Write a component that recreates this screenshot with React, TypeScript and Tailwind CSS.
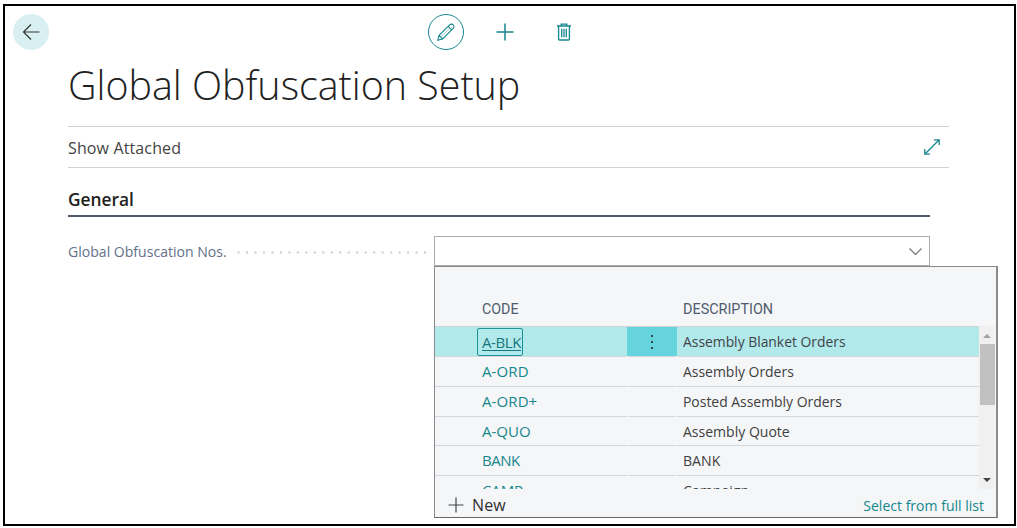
import React from "react";

const rows = [
  { code: "A-ORD", description: "Assembly Orders", codeSpacing: "tracking-[0.1px]", descScale: "scale-x-[0.93]" },
  { code: "A-ORD+", description: "Posted Assembly Orders", codeSpacing: "tracking-[0.1px]", descScale: "scale-x-[0.928]" },
  { code: "A-QUO", description: "Assembly Quote", codeSpacing: "tracking-[0px]", descScale: "scale-x-[0.935]" },
  { code: "BANK", description: "BANK", codeSpacing: "tracking-[-0.5px]", descScale: "scale-x-[0.94]" },
  { code: "CAMP", description: "Campaign", codeSpacing: "tracking-[-0.1px]", descScale: "scale-x-[0.94]" },
];

function Toolbar() {
  return (
    <div className="flex h-[52px] items-center pl-2">
      <button className="flex size-9 items-center justify-center rounded-full bg-[#d9f0f3]">
        <svg className="size-[18px]" viewBox="0 0 18 18" fill="none" stroke="#333" strokeWidth="1.2">
          <path d="M17.5 9H1.5M9 1.5 1.5 9 9 16.5" />
        </svg>
      </button>
      <button className="ml-[379px] flex size-9 items-center justify-center rounded-full border-[1.5px] border-[#16878d]">
        <svg className="size-[18px]" viewBox="0 0 18 18" fill="none" stroke="#16878d" strokeWidth="1.1">
          <path d="M.8 17.2 2.1 12.4 12.7 1.8a2.45 2.45 0 0 1 3.5 3.5L5.6 15.9ZM2.1 12.4l3.5 3.5M11.2 3.3l3.5 3.5" />
          <path d="M4.4 13.6 12.6 5.4" strokeWidth="0.4" />
        </svg>
      </button>
      <svg className="ml-8 size-[18px]" viewBox="0 0 18 18" fill="none" stroke="#16878d" strokeWidth="1.5">
        <path d="M9 .5v17M.5 9h17" />
      </svg>
      <svg className="ml-[42px] h-[18px] w-4" viewBox="0 0 16 18" fill="none" stroke="#16878d" strokeWidth="1.3">
        <path d="M1 3h14M5.2 3V1.1h5.6V3M2.6 3v13.2q0 .8.8.8h9.2q.8 0 .8-.8V3M5.7 5.8v8.4M8 5.8v8.4M10.3 5.8v8.4" />
      </svg>
    </div>
  );
}

function Scrollbar() {
  return (
    <div className="flex w-4 flex-col items-center bg-[#f0f0f0]">
      <svg className="h-[18px] w-4 shrink-0" viewBox="0 0 16 18">
        <path d="M4 12 8 8l4 4Z" fill="#a3a3a3" />
      </svg>
      <div className="h-[61px] w-[15px] bg-[#c1c1c1]" />
      <div className="flex-1" />
      <svg className="h-[17px] w-4 shrink-0" viewBox="0 0 16 17">
        <path d="M4 6h8l-4 4Z" fill="#444" />
      </svg>
    </div>
  );
}

function LookupMenu() {
  return (
    <div className="absolute top-[30px] left-0 flex h-[252px] w-[564px] flex-col border border-r-2 border-[#8a8a8a] border-b-[#666] bg-[#f5f6f8]">
      <div className="flex h-[59px] items-end pb-[7px] pl-[47px] font-['Roboto',sans-serif] text-[15px] leading-5 text-[#505c6d]">
        <div className="w-[201px]">
          <span className="inline-block origin-left scale-x-[0.95]">CODE</span>
        </div>
        <span className="inline-block origin-left scale-x-[0.96]">DESCRIPTION</span>
      </div>
      <div className="flex h-[163px]">
        <div className="flex w-[544px] flex-col overflow-hidden text-[15px]">
          <div className="flex h-[30.4px] shrink-0 items-center border-t border-[#cfd3d8] bg-[#b2e9eb]">
            <div className="flex w-[192px] pl-[42px]">
              <a className="h-7 w-[46px] rounded-[2px] border-[1.5px] border-[#1b9399] pl-1 leading-[26px] tracking-[-0.4px] whitespace-nowrap text-[#16777e] underline underline-offset-2">
                A-BLK
              </a>
            </div>
            <div className="flex h-full w-[50px] items-center justify-center bg-[#66d4dc]">
              <svg className="h-4 w-1" viewBox="0 0 4 16" fill="#30474b">
                <path d="M1 1h2v2H1zM1 7h2v2H1zM1 13h2v2H1z" />
              </svg>
            </div>
            <span className="ml-1.5 inline-block origin-left scale-x-[0.925] whitespace-nowrap text-[#3f4448]">Assembly Blanket Orders</span>
          </div>
          {rows.map((row) => (
            <div key={row.code} className="flex h-[29.6px] shrink-0 items-center leading-[28px]">
              <div className={`h-full w-[192px] border-t border-[#d3d6dc] pl-[47px] text-[#16878d] ${row.codeSpacing}`}>{row.code}</div>
              <div className="ml-px h-full w-12 border-t border-[#d3d6dc]" />
              <div className="ml-px h-full flex-1 border-t border-[#d3d6dc] pl-1.5 text-[#404040]">
                <span className={`inline-block origin-left ${row.descScale}`}>{row.description}</span>
              </div>
            </div>
          ))}
        </div>
        <Scrollbar />
      </div>
      <div className="flex flex-1 items-center pt-1 pr-3 pl-[13px]">
        <svg className="size-4" viewBox="0 0 16 16" stroke="#444" strokeWidth="1.2">
          <path d="M8 .5v15M.5 8h15" />
        </svg>
        <span className="ml-2 text-base leading-5 tracking-[0.1px] text-[#303030]">New</span>
        <span className="ml-auto inline-block origin-right scale-x-[0.936] text-[15px] leading-5 text-[#16878d]">Select from full list</span>
      </div>
    </div>
  );
}

export default function App() {
  return (
    <div className="h-[528px] w-[1017px] overflow-hidden bg-white pt-1 pl-[3px] font-['Open_Sans','Noto_Sans',sans-serif]">
      <main className="h-[522px] w-[1013px] border-2 border-black">
        <Toolbar />
        <div className="pl-[63px]">
          <h1 className="h-[68px] origin-left scale-x-[0.961] text-[41px] leading-[52px] font-light whitespace-nowrap text-[#212121]">
            Global Obfuscation Setup
          </h1>
          <div className="flex h-[42px] w-[881px] items-center justify-between border-y border-[#ccd3d8] pr-[9px]">
            <span className="pt-0.5 text-base tracking-[0.13px] text-[#444]">Show Attached</span>
            <svg className="size-4" viewBox="0 0 16 16" fill="none" stroke="#16878d" strokeWidth="1.3">
              <path d="M.8 15.2 15.2.8M10 .8h5.2V6M.8 10v5.2H6" />
            </svg>
          </div>
          <h2 className="flex h-[49px] w-[862px] items-end border-b-2 border-[#505c6d] pb-1 text-lg leading-6 font-semibold text-[#212121]">
            <span className="inline-block origin-left scale-x-[0.963]">General</span>
          </h2>
          <div className="mt-[19px] flex w-[862px] items-center">
            <div className="w-[169px] shrink-0">
              <label className="inline-block origin-left scale-x-[0.937] text-[15px] whitespace-nowrap text-[#64708a]">Global Obfuscation Nos.</label>
            </div>
            <svg className="mt-0.5 h-[3px] w-[190px] shrink-0" viewBox="0 0 190 3">
              <path d="M.5 1.5H190" stroke="#cbcbcb" strokeWidth="2" strokeDasharray="2 6.48" />
            </svg>
            <div className="relative ml-[7px] h-[30px] w-[496px] shrink-0">
              <div className="flex h-full items-center justify-end border-[1.5px] border-[#ababab] pr-[7px]">
                <svg className="h-[7px] w-[13px]" viewBox="0 0 13 7" fill="none" stroke="#777" strokeWidth="1.2">
                  <path d="m.5.5 6 6 6-6" />
                </svg>
              </div>
              <LookupMenu />
            </div>
          </div>
        </div>
      </main>
    </div>
  );
}
